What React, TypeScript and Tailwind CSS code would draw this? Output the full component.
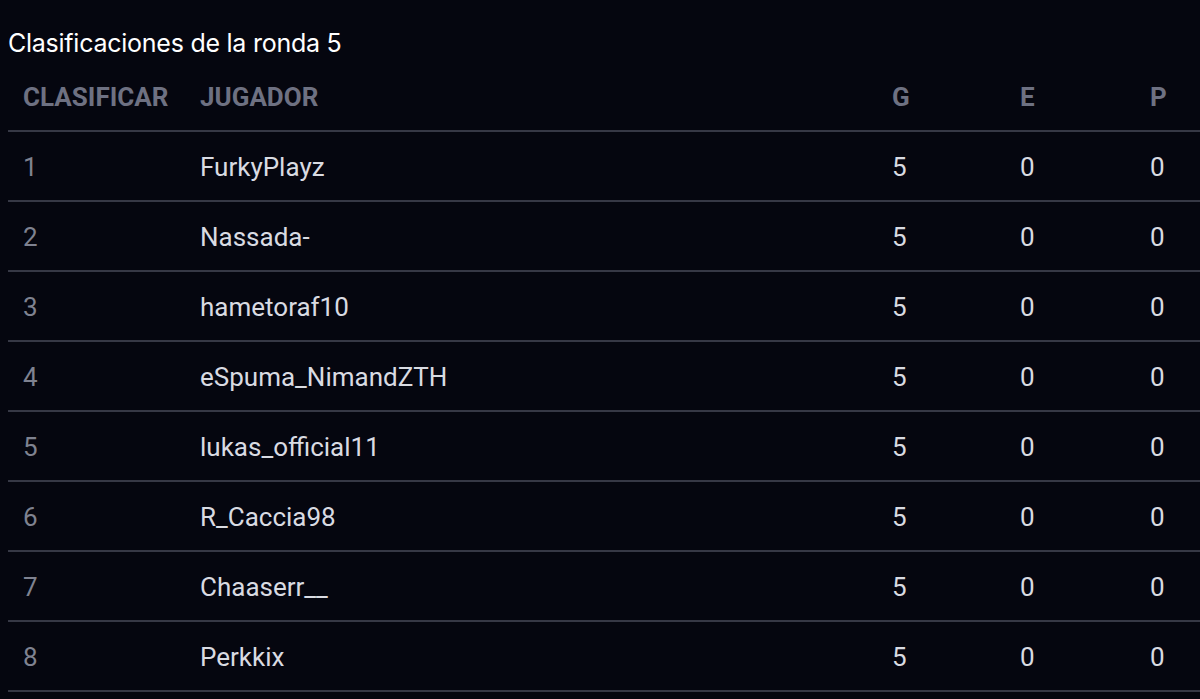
import React from 'react';

const players = [
  'FurkyPlayz',
  'Nassada-',
  'hametoraf10',
  'eSpuma_NimandZTH',
  'lukas_official11',
  'R_Caccia98',
  'Chaaserr__',
  'Perkkix',
];

const App: React.FC = () => {
  return (
    <div className="w-[1200px] h-[699px] overflow-hidden bg-[#05060f] pl-2 font-['Roboto',sans-serif]">
      <h2 className="h-[62px] pt-[28px] text-[25px] leading-[30px] tracking-[-0.25px] text-white font-['Inter',sans-serif]">
        Clasificaciones de la ronda 5
      </h2>

      <div className="w-[1240px]">
        <div className="flex h-[70px] items-center pt-[2px] border-b-2 border-[#363845] text-[26px] font-bold uppercase text-[#6e7182]">
          <div className="w-[177px] pl-[15px]">Clasificar</div>
          <div className="w-[692px] pl-[15px]">Jugador</div>
          <div className="w-[128px] pl-[15px]">G</div>
          <div className="w-[130px] pl-[15px]">E</div>
          <div className="flex-1 pl-[15px]">P</div>
        </div>

        {players.map((name, i) => (
          <div
            key={name}
            className="flex h-[70px] items-center pt-[2px] border-b-2 border-[#363845] text-[26px] text-[#d9dbe2]"
          >
            <div className="w-[177px] pl-[15px] text-[#7f8290]">{i + 1}</div>
            <div className="w-[692px] pl-[15px]">{name}</div>
            <div className="w-[128px] pl-[15px]">5</div>
            <div className="w-[130px] pl-[15px]">0</div>
            <div className="flex-1 pl-[15px]">0</div>
          </div>
        ))}
      </div>
    </div>
  );
};

export default App;
